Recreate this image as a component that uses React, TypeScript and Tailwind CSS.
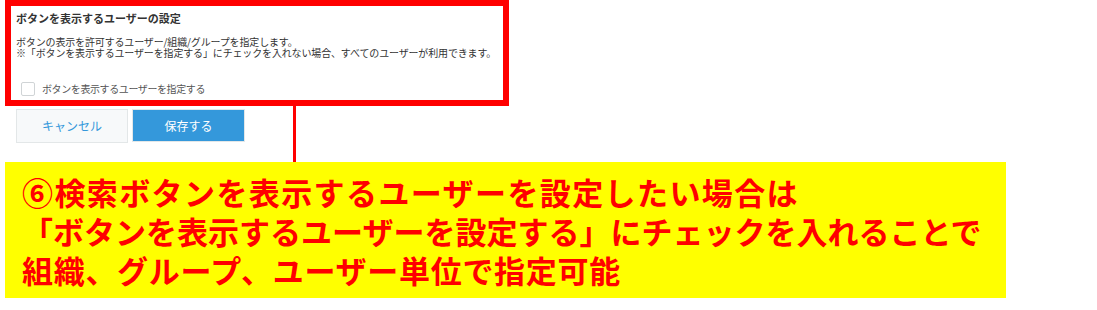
const jp = "font-['Noto_Sans_CJK_JP',sans-serif]";

function SettingsBox() {
  return (
    <div className="ml-[5px] h-[106px] w-[504px] border-[6px] border-[#ff0000] bg-white">
      <div className={`pl-[5px] pt-[6px] text-[#333] ${jp}`}>
        <div className="whitespace-nowrap text-[11px] font-bold leading-[12px]">
          ボタンを表示するユーザーの設定
        </div>
        <div className="mt-[12px] whitespace-nowrap text-[10px] leading-[11px] tracking-[-0.15px]">
          <p>ボタンの表示を許可するユーザー/組織/グループを指定します。</p>
          <p>
            ※「ボタンを表示するユーザーを指定する」にチェックを入れない場合、すべてのユーザーが利用できます。
          </p>
        </div>
        <label className="ml-[5px] mt-[24px] flex h-[14px] items-center gap-[7px]">
          <span className="h-[14px] w-[14px] shrink-0 rounded-[2px] border border-[#d0d4d6] bg-white" />
          <span className="whitespace-nowrap text-[10px] leading-[14px] tracking-[-0.4px] text-[#555]">
            ボタンを表示するユーザーを指定する
          </span>
        </label>
      </div>
    </div>
  );
}

function ButtonRow() {
  return (
    <div className={`flex h-[56px] ${jp}`}>
      <div className="ml-[16px] flex items-start gap-[4px] pt-[3px]">
        <button className="h-[34px] w-[112px] border border-[#e3e7e8] bg-[#f7f9fa] text-[12px] text-[#3498db]">
          キャンセル
        </button>
        <button className="h-[33px] w-[113px] border border-[#e3e7e8] bg-[#3498db] text-[12px] text-white">
          保存する
        </button>
      </div>
      <div className="ml-[48px] w-[3px] bg-[#ff0000]" />
    </div>
  );
}

function Callout() {
  return (
    <div className="ml-[5px] h-[136px] w-[1001px] bg-[#ffff00] pl-[17px] pt-[10px]">
      <div className="whitespace-nowrap font-['Noto_Sans_CJK_JP',sans-serif] text-[31px] font-semibold leading-[39px] text-[#ff0000]">
        <p className="tracking-[1.4px]">⑥検索ボタンを表示するユーザーを設定したい場合は</p>
        <p>「ボタンを表示するユーザーを設定する」にチェックを入れることで</p>
        <p className="tracking-[0.7px]">組織、グループ、ユーザー単位で指定可能</p>
      </div>
    </div>
  );
}

export default function App() {
  return (
    <div className="h-[310px] w-[1097px] overflow-hidden bg-white">
      <SettingsBox />
      <ButtonRow />
      <Callout />
    </div>
  );
}
